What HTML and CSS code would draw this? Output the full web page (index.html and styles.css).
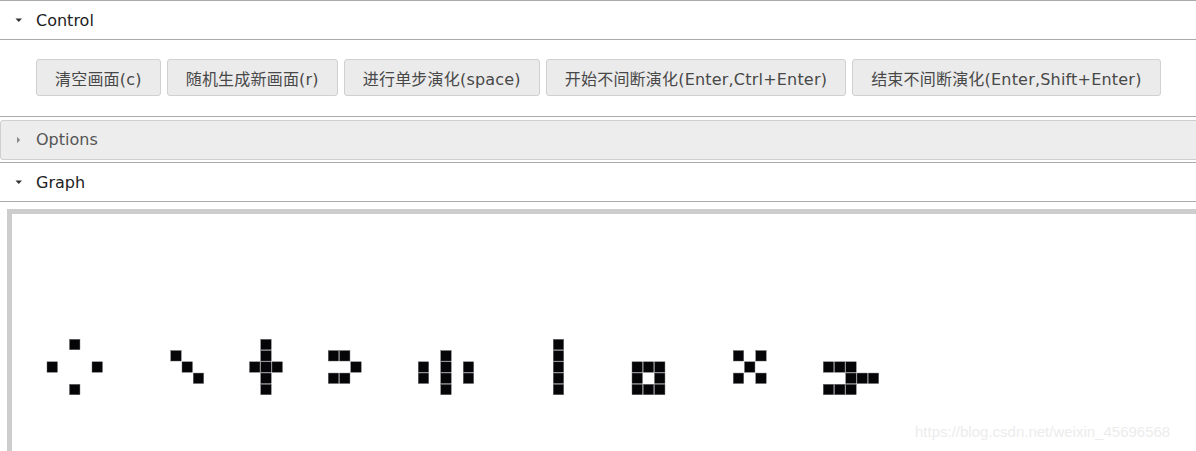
FILE: index.html
```html
<!DOCTYPE html>
<html lang="zh">
<head>
<meta charset="utf-8">
<title>Life</title>
<link rel="stylesheet" href="styles.css">
</head>
<body>
<div class="accordion">
  <div class="hdr">
    <svg class="tri" width="8" height="8" viewBox="0 0 8 8"><path d="M0.5 2.5 L7 2.5 L3.75 6 Z" fill="#333"/></svg>
    <span class="hdr-text">Control</span>
  </div>
  <div class="content">
    <div class="btn-row">
      <button class="btn">清空画面(c)</button>
      <button class="btn">随机生成新画面(r)</button>
      <button class="btn">进行单步演化(space)</button>
      <button class="btn">开始不间断演化(Enter,Ctrl+Enter)</button>
      <button class="btn">结束不间断演化(Enter,Shift+Enter)</button>
    </div>
  </div>
  <div class="hdr-collapsed">
    <div class="bar">
      <svg class="tri" width="8" height="8" viewBox="0 0 8 8"><path d="M2 0.8 L5.2 4 L2 7.2 Z" fill="#8a8a8a"/></svg>
      <span class="hdr-text muted">Options</span>
    </div>
  </div>
  <div class="hdr">
    <svg class="tri" width="8" height="8" viewBox="0 0 8 8"><path d="M0.5 2.5 L7 2.5 L3.75 6 Z" fill="#333"/></svg>
    <span class="hdr-text">Graph</span>
  </div>
  <div class="graph">
    <div class="board">
      <svg class="cells" width="1400" height="400" viewBox="0 0 1400 400">
        <g transform="translate(35 125.3) scale(11.25)" fill="#050507" stroke="#6a6a70" stroke-width="0.04">
          <rect x="2" y="0" width="0.93" height="0.93"/>
          <rect x="0" y="2" width="0.93" height="0.93"/>
          <rect x="4" y="2" width="0.93" height="0.93"/>
          <rect x="2" y="4" width="0.93" height="0.93"/>

          <rect x="11" y="1" width="0.93" height="0.93"/>
          <rect x="12" y="2" width="0.93" height="0.93"/>
          <rect x="13" y="3" width="0.93" height="0.93"/>

          <rect x="19" y="0" width="0.93" height="0.93"/>
          <rect x="19" y="1" width="0.93" height="0.93"/>
          <rect x="18" y="2" width="0.93" height="0.93"/>
          <rect x="19" y="2" width="0.93" height="0.93"/>
          <rect x="20" y="2" width="0.93" height="0.93"/>
          <rect x="19" y="3" width="0.93" height="0.93"/>
          <rect x="19" y="4" width="0.93" height="0.93"/>

          <rect x="25" y="1" width="0.93" height="0.93"/>
          <rect x="26" y="1" width="0.93" height="0.93"/>
          <rect x="27" y="2" width="0.93" height="0.93"/>
          <rect x="25" y="3" width="0.93" height="0.93"/>
          <rect x="26" y="3" width="0.93" height="0.93"/>

          <rect x="33" y="2" width="0.93" height="0.93"/>
          <rect x="33" y="3" width="0.93" height="0.93"/>
          <rect x="35" y="1" width="0.93" height="0.93"/>
          <rect x="35" y="2" width="0.93" height="0.93"/>
          <rect x="35" y="3" width="0.93" height="0.93"/>
          <rect x="35" y="4" width="0.93" height="0.93"/>
          <rect x="37" y="2" width="0.93" height="0.93"/>
          <rect x="37" y="3" width="0.93" height="0.93"/>

          <rect x="45" y="0" width="0.93" height="0.93"/>
          <rect x="45" y="1" width="0.93" height="0.93"/>
          <rect x="45" y="2" width="0.93" height="0.93"/>
          <rect x="45" y="3" width="0.93" height="0.93"/>
          <rect x="45" y="4" width="0.93" height="0.93"/>

          <rect x="52" y="2" width="0.93" height="0.93"/>
          <rect x="53" y="2" width="0.93" height="0.93"/>
          <rect x="54" y="2" width="0.93" height="0.93"/>
          <rect x="52" y="3" width="0.93" height="0.93"/>
          <rect x="54" y="3" width="0.93" height="0.93"/>
          <rect x="52" y="4" width="0.93" height="0.93"/>
          <rect x="53" y="4" width="0.93" height="0.93"/>
          <rect x="54" y="4" width="0.93" height="0.93"/>

          <rect x="61" y="1" width="0.93" height="0.93"/>
          <rect x="63" y="1" width="0.93" height="0.93"/>
          <rect x="62" y="2" width="0.93" height="0.93"/>
          <rect x="61" y="3" width="0.93" height="0.93"/>
          <rect x="63" y="3" width="0.93" height="0.93"/>

          <rect x="69" y="2" width="0.93" height="0.93"/>
          <rect x="70" y="2" width="0.93" height="0.93"/>
          <rect x="71" y="2" width="0.93" height="0.93"/>
          <rect x="71" y="3" width="0.93" height="0.93"/>
          <rect x="72" y="3" width="0.93" height="0.93"/>
          <rect x="73" y="3" width="0.93" height="0.93"/>
          <rect x="69" y="4" width="0.93" height="0.93"/>
          <rect x="70" y="4" width="0.93" height="0.93"/>
          <rect x="71" y="4" width="0.93" height="0.93"/>
        </g>
      </svg>
    </div>
  </div>
</div>
<div class="watermark">https://blog.csdn.net/weixin_45696568</div>
</body>
</html>
```

FILE: styles.css
```css
html, body {
  margin: 0;
  padding: 0;
  overflow: hidden;
  background: #fff;
}
body {
  font-family: "DejaVu Sans", "Noto Sans CJK SC", sans-serif;
  font-size: 16px;
  color: #222;
  width: 1196px;
  height: 451px;
  position: relative;
}
.accordion {
  display: flex;
  flex-direction: column;
}
.hdr {
  height: 36px;
  padding-top: 2px;
  border-top: 1px solid #aaa;
  border-bottom: 1px solid #aaa;
  display: flex;
  align-items: center;
  padding-left: 15px;
  gap: 13px;
}
.tri {
  display: block;
  flex: none;
}
.hdr .tri {
  margin-top: -2px;
}
.hdr-text {
  line-height: 1;
  color: #222;
}
.hdr-text.muted {
  color: #555;
}
.content {
  padding: 19px 30px 20px 36px;
}
.btn-row {
  display: flex;
  gap: 6px;
}
.btn {
  font-family: "DejaVu Sans", "Noto Sans CJK SC", sans-serif;
  font-size: 16px;
  letter-spacing: 0.2px;
  color: #484848;
  height: 37px;
  padding: 0 18px;
  background: #ebebeb;
  border: 1px solid #d0d0d0;
  border-radius: 3px;
  white-space: nowrap;
  margin: 0;
}
.hdr-collapsed {
  border-top: 1px solid #aaa;
  padding: 3px 0 2px;
}
.bar {
  height: 38px;
  margin-right: -3px;
  background: #ededed;
  border: 1px solid #cfcfcf;
  border-radius: 3px;
  display: flex;
  align-items: center;
  padding-left: 14px;
  gap: 13px;
}
.graph {
  padding: 7px 0 0 7px;
}
.board {
  width: 1400px;
  height: 400px;
  border: 5px solid #cdcdcd;
  background: #fff;
}
.cells {
  display: block;
}
.watermark {
  position: absolute;
  left: 915px;
  top: 423px;
  font-family: "Liberation Sans", Arial, sans-serif;
  font-size: 15px;
  color: #ececec;
  white-space: nowrap;
}
```
